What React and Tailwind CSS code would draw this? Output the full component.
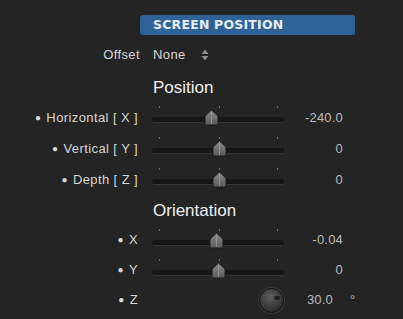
import React from 'react';

const LABEL = "text-[13px] tracking-[0.4px] text-[#d6d6d6] font-['Liberation_Sans',Arial,sans-serif]";
const VALUE = "text-[13px] tracking-[0.2px] text-[#bcbcbc] font-['Liberation_Sans',Arial,sans-serif]";

// slider thumb: a little pentagon with a center groove
const Thumb = ({ left }) => (
  <svg
    className="absolute top-[7px]"
    style={{ left: left - 7 }}
    width="15"
    height="17"
    viewBox="0 0 15 17"
  >
    <defs>
      <linearGradient id="thumbg" x1="0" y1="0" x2="0" y2="1">
        <stop offset="0" stopColor="#8a8a8a" />
        <stop offset="1" stopColor="#5a5a5a" />
      </linearGradient>
    </defs>
    <path d="M1 7 L7.5 1 L14 7 L14 15 Q14 16 13 16 L2 16 Q1 16 1 15 Z" fill="url(#thumbg)" stroke="#1a1a1a" strokeWidth="1" />
    <line x1="7.5" y1="3" x2="7.5" y2="15" stroke="#9a9a9a" strokeWidth="0.8" />
  </svg>
);

const Slider = ({ pos }) => (
  <div className="relative w-[132px] h-full">
    <div className="absolute top-[4px] left-[7px] w-px h-[2px] bg-[#6a6a6a]" />
    <div className="absolute top-[4px] left-[67px] w-px h-[2px] bg-[#6a6a6a]" />
    <div className="absolute top-[4px] left-[125px] w-px h-[2px] bg-[#6a6a6a]" />
    <div className="absolute top-[15px] left-0 w-[132px] h-[6px] rounded-full bg-[#161616] border-b border-[#353535]" />
    <Thumb left={pos} />
  </div>
);

const Row = ({ label, pos, value, h = 'h-[31px]' }) => (
  <div className={`flex items-center ${h}`}>
    <div className={`w-[140px] text-right pr-[2px] ${LABEL}`}>
      <span className="mr-[5px] text-[10px] align-[1px]">●</span>
      {label}
    </div>
    <div className="ml-[12px] h-full">
      <Slider pos={pos} />
    </div>
    <div className={`w-[59px] text-right ${VALUE}`}>{value}</div>
  </div>
);

export default function App() {
  return (
    <div className="w-[403px] h-[319px] bg-[#242424] overflow-hidden pt-[15px]">
      <div className="ml-[140px] w-[215px] h-[20px] rounded-[3px] bg-[#2f6297] pl-[13px] flex items-center text-[12.5px] font-bold text-[#e6edf5] tracking-[0.2px] font-['DejaVu_Sans',Verdana,sans-serif]">
        SCREEN POSITION
      </div>

      <div className="mt-[10px] h-[20px] flex items-center">
        <div className={`w-[140px] text-right ${LABEL}`}>Offset</div>
        <div className={`ml-[13px] ${LABEL}`}>None</div>
        <svg className="ml-[15px]" width="8" height="12" viewBox="0 0 8 12">
          <path d="M4 0.5 L7.5 5 L0.5 5 Z" fill="#8c8c8c" />
          <path d="M4 11.5 L7.5 7 L0.5 7 Z" fill="#8c8c8c" />
        </svg>
      </div>

      <div className="mt-[13px] h-[20px] pl-[153px] flex items-center text-[17px] text-[#f0f0f0] font-['Liberation_Sans',Arial,sans-serif]">
        Position
      </div>

      <div className="mt-[4px]">
        <Row label="Horizontal [ X ]" pos={59} value="-240.0" />
        <Row label="Vertical [ Y ]" pos={67} value="0" />
        <Row label="Depth [ Z ]" pos={67} value="0" />
      </div>

      <div className="mt-[6px] h-[20px] pl-[153px] flex items-center text-[17px] text-[#f0f0f0] font-['Liberation_Sans',Arial,sans-serif]">
        Orientation
      </div>

      <div className="mt-[4px]">
        <Row label="X" pos={64} value="-0.04" h="h-[30px]" />
        <Row label="Y" pos={66} value="0" h="h-[30px]" />
        <div className="flex items-center h-[30px]">
          <div className={`w-[140px] text-right pr-[2px] ${LABEL}`}>
            <span className="mr-[5px] text-[10px] align-[1px]">●</span>Z
          </div>
          <div className="ml-[119px] w-[25px] h-[25px] rounded-full bg-[radial-gradient(circle_at_45%_35%,#5e5e5e,#2c2c2c_75%)] border border-[#141414] shadow-[0_0_0_1px_#3a3a3a] relative">
            <div className="absolute top-[7px] left-[14px] w-[6px] h-[4px] rounded-full bg-[#1c1c1c]" />
          </div>
          <div className={`w-[49px] text-right ${VALUE}`}>30.0</div>
          <div className={`ml-[17px] ${VALUE}`}>°</div>
        </div>
      </div>
    </div>
  );
}
